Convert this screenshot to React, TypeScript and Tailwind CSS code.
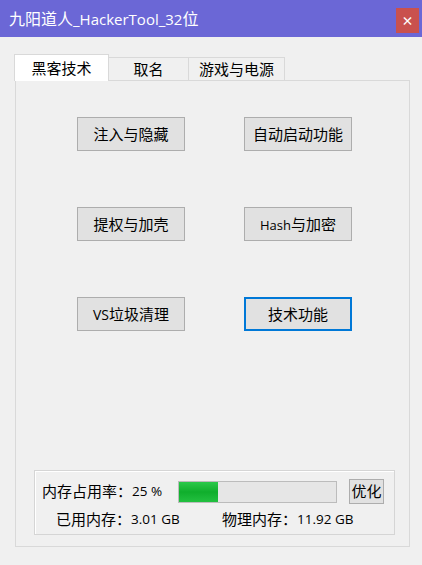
const cjk = "font-['Noto_Sans_CJK_SC','Noto_Sans',sans-serif]";
const num = "font-['Open_Sans','Noto_Sans_CJK_SC',sans-serif]";

const buttons = ['注入与隐藏', '自动启动功能', '提权与加壳', 'Hash与加密', 'VS垃圾清理', '技术功能'];

const App = () => {
  const usage = 25;

  return (
    <div className={`flex h-[565px] w-[422px] flex-col overflow-hidden bg-[#f0f0f0] text-black ${cjk}`}>
      {/* Title bar */}
      <div className="flex h-[37px] shrink-0 items-center justify-between bg-[#6b67d6] pl-[9px] pr-[3px]">
        <span className="text-[16px] leading-none text-white">
          九阳道人<span className={`${num} text-[15px]`}>_HackerTool_32</span>位
        </span>
        <div className="mt-[4px] flex h-[25px] w-[23px] items-center justify-center bg-[#c9514e] text-[12px] font-bold leading-none text-white">
          ×
        </div>
      </div>

      {/* Tabs */}
      <div className="ml-[14px] mt-[17px] flex items-end">
        <div className="relative z-10 -mb-px flex h-[27px] w-[95px] items-center justify-center border border-b-0 border-[#d9d9d9] bg-white text-[15px]">
          黑客技术
        </div>
        <div className="flex h-[23px] w-[80px] items-center justify-center border border-l-0 border-b-0 border-[#d9d9d9] bg-[#f0f0f0] text-[15px]">
          取名
        </div>
        <div className="flex h-[23px] w-[96px] items-center justify-center border border-l-0 border-b-0 border-[#d9d9d9] bg-[#f0f0f0] text-[15px]">
          游戏与电源
        </div>
      </div>

      {/* Panel */}
      <div className="ml-[15px] flex h-[467px] w-[395px] flex-col border border-[#d9d9d9] bg-[#f0f0f0]">
        <div className="ml-[61px] mt-[36px] grid grid-cols-[108px_108px] gap-x-[59px] gap-y-[56px]">
          {buttons.map((label) => {
            const active = label === '技术功能';
            return (
              <div
                key={label}
                className={`flex h-[34px] items-center justify-center bg-[#e1e1e1] text-[15px] ${
                  active ? 'border-2 border-[#0078d7]' : 'border border-[#adadad]'
                }`}
              >
                {label === 'Hash与加密' ? (
                  <span>
                    <span className={`${num} text-[13px]`}>Hash</span>与加密
                  </span>
                ) : label === 'VS垃圾清理' ? (
                  <span>
                    <span className={`${num} text-[14px]`}>VS</span>垃圾清理
                  </span>
                ) : (
                  label
                )}
              </div>
            );
          })}
        </div>

        {/* Memory group */}
        <div className="mb-[11px] ml-[18px] mt-auto flex h-[65px] w-[361px] flex-col border border-[#d5d5d5] shadow-[inset_1px_1px_0_#ffffff]">
          <div className="mt-[8px] flex items-center">
            <span className="ml-[7px] text-[15px]">内存占用率：</span>
            <span className={`${num} w-[46px] text-[13.5px]`}>{usage} %</span>
            <div className="h-[22px] w-[159px] border border-[#bcbcbc] bg-[#e6e6e6]">
              <div
                className="h-full bg-gradient-to-b from-[#2ac94a] via-[#0fae2c] to-[#22c040]"
                style={{ width: `${usage}%` }}
              />
            </div>
            <div className="ml-[12px] flex h-[25px] w-[35px] items-center justify-center border border-[#adadad] bg-[#e1e1e1] text-[15px]">
              优化
            </div>
          </div>
          <div className="mt-[4px] flex items-center">
            <span className="ml-[21px] text-[15px]">已用内存：</span>
            <span className={`${num} w-[91px] text-[13.5px]`}>3.01 GB</span>
            <span className="text-[15px]">物理内存：</span>
            <span className={`${num} text-[13.5px]`}>11.92 GB</span>
          </div>
        </div>
      </div>
    </div>
  );
};

export default App;
